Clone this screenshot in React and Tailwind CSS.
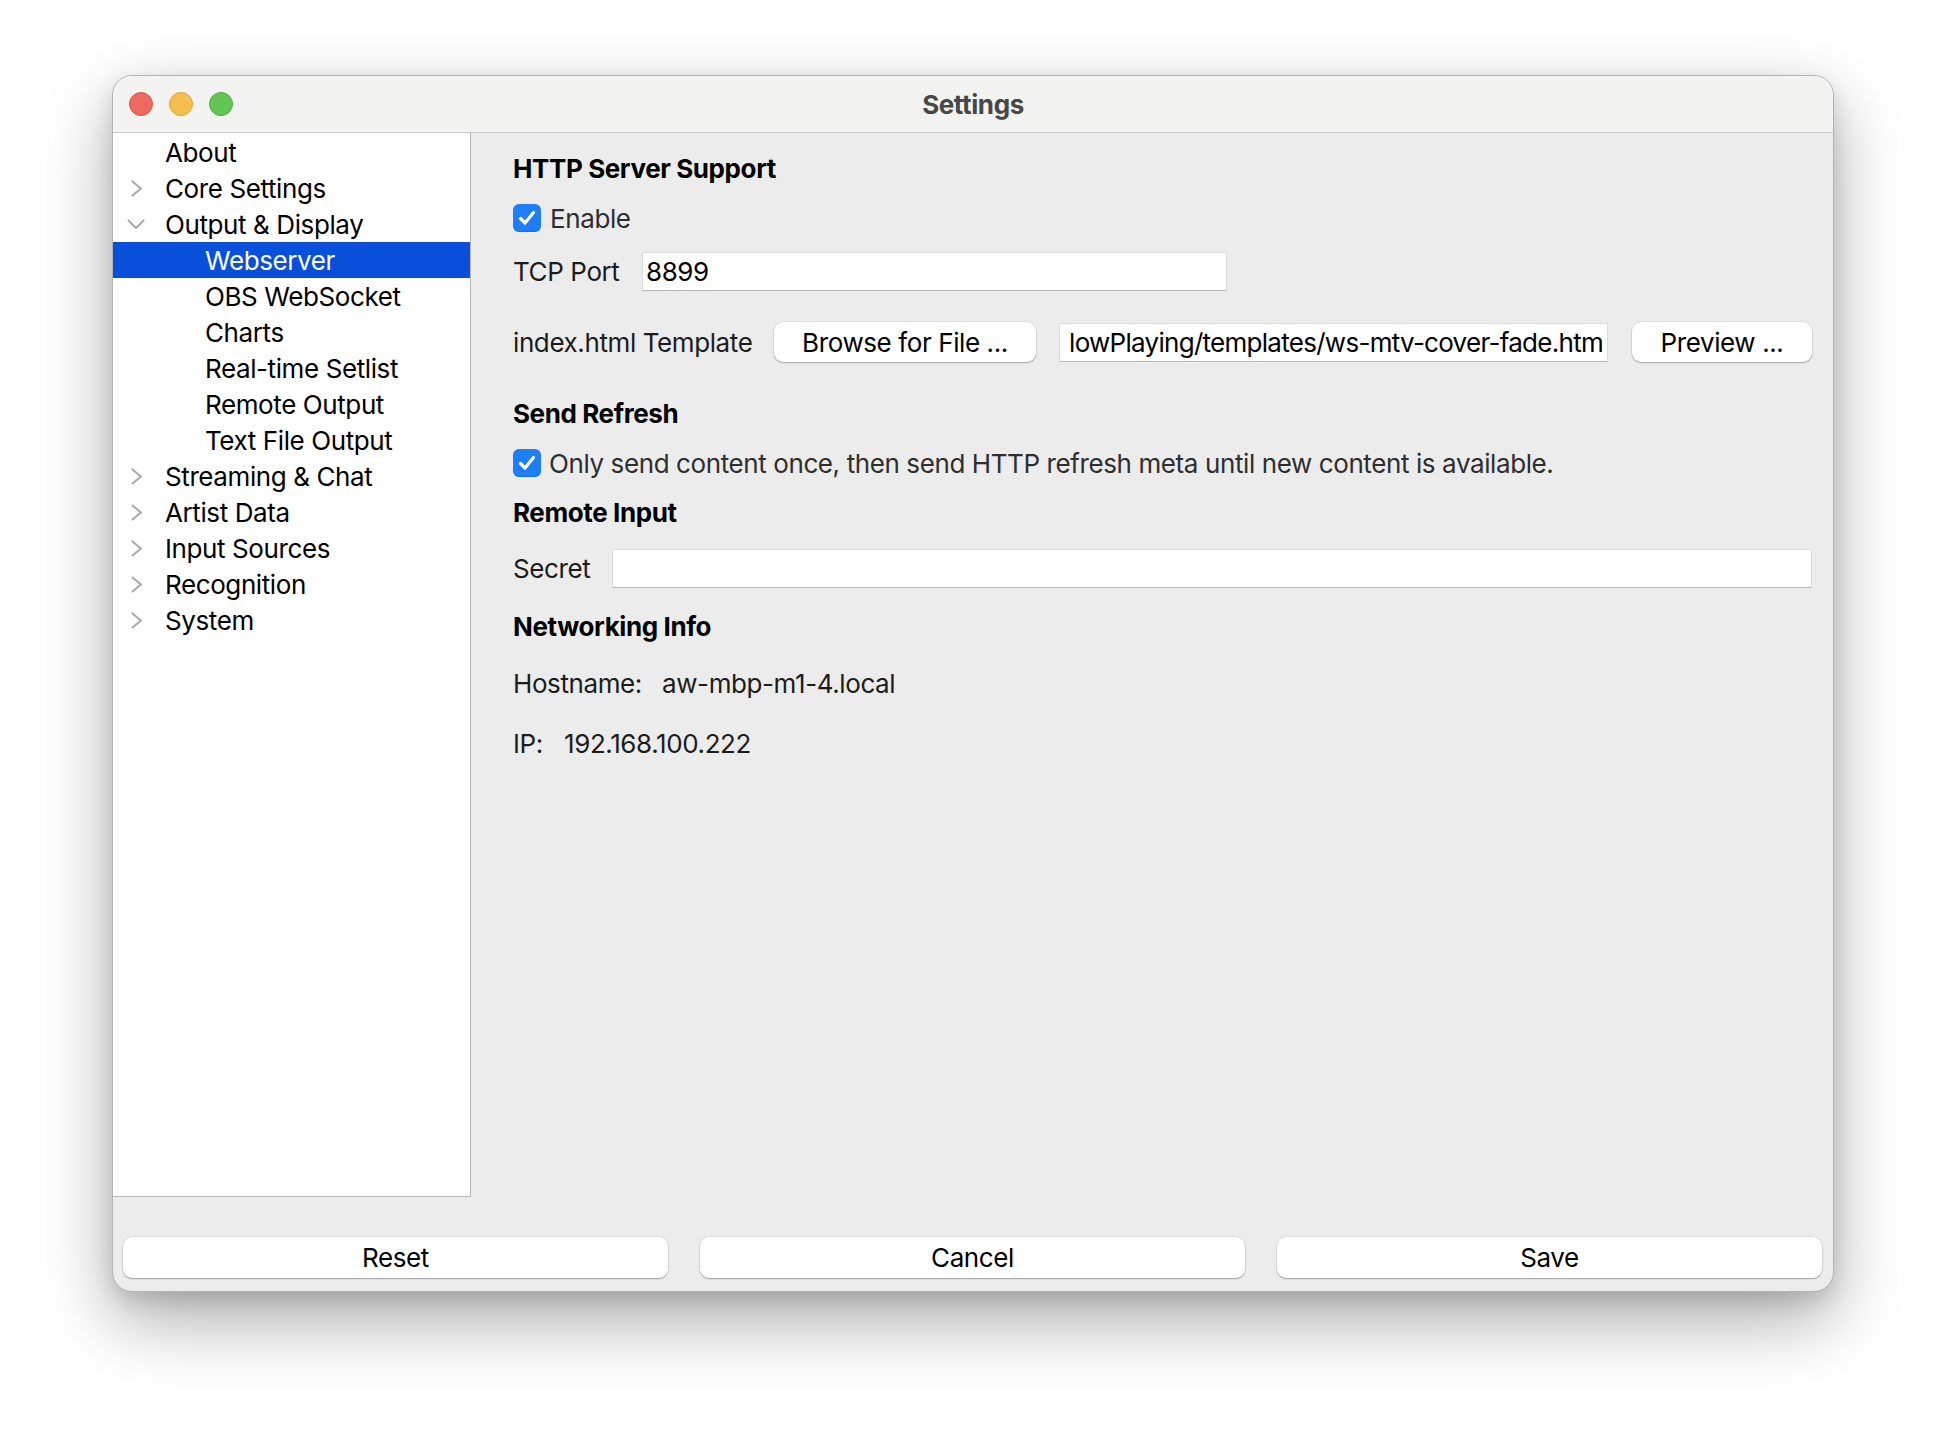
import React from "react";

const tree = [
  { label: "About", level: 0 },
  { label: "Core Settings", level: 0, chevron: "right" },
  { label: "Output & Display", level: 0, chevron: "down" },
  { label: "Webserver", level: 1, selected: true },
  { label: "OBS WebSocket", level: 1 },
  { label: "Charts", level: 1 },
  { label: "Real-time Setlist", level: 1 },
  { label: "Remote Output", level: 1 },
  { label: "Text File Output", level: 1 },
  { label: "Streaming & Chat", level: 0, chevron: "right" },
  { label: "Artist Data", level: 0, chevron: "right" },
  { label: "Input Sources", level: 0, chevron: "right" },
  { label: "Recognition", level: 0, chevron: "right" },
  { label: "System", level: 0, chevron: "right" },
];

function Chevron({ dir }) {
  if (dir === "down") {
    return (
      <svg width="18" height="11" viewBox="0 0 18 11" className="absolute left-[14px] top-[13px]">
        <path d="M1.5 1.5 L9 9 L16.5 1.5" fill="none" stroke="#a9a9a9" strokeWidth="2" strokeLinecap="round" strokeLinejoin="round" />
      </svg>
    );
  }
  return (
    <svg width="12" height="17" viewBox="0 0 12 17" className="absolute left-[18px] top-[10px]">
      <path d="M1.5 1.5 L10 8.5 L1.5 15.5" fill="none" stroke="#a9a9a9" strokeWidth="2" strokeLinecap="round" strokeLinejoin="round" />
    </svg>
  );
}

function Checkbox() {
  return (
    <div className="w-[28px] h-[28px] rounded-[6px] bg-[#1d7ef7] shadow-[inset_0_-1px_0_rgba(0,0,0,0.12)] flex items-center justify-center shrink-0">
      <svg width="18" height="16" viewBox="0 0 18 16">
        <path d="M2.5 8.5 L7 13 L15.5 2.5" fill="none" stroke="#ffffff" strokeWidth="3.2" strokeLinecap="round" strokeLinejoin="round" />
      </svg>
    </div>
  );
}

function MacButton({ children, className = "" }) {
  return (
    <button className={"h-[40px] bg-white rounded-[9px] text-[26px] text-black whitespace-nowrap shadow-[0_1px_1.5px_rgba(0,0,0,0.28),0_0_0_0.5px_rgba(0,0,0,0.1)] flex items-center justify-center " + className}>
      {children}
    </button>
  );
}

function TextInput({ className = "", children }) {
  return (
    <div className={"h-[39px] min-w-0 bg-white border-t border-l border-r border-[#dcdcdc] border-b border-b-[#b9b9b9] flex items-center overflow-hidden text-[26px] text-black " + className}>
      {children}
    </div>
  );
}

export default function App() {
  return (
    <div className="w-[1946px] h-[1440px] bg-white overflow-hidden font-[Inter,'Noto_Sans',sans-serif] tracking-[-0.4px]">
      <div className="ml-[112px] mt-[75px] w-[1722px] h-[1217px] rounded-[20px] border border-[#b3b3b3] bg-[#ececec] overflow-hidden flex flex-col shadow-[0_28px_70px_rgba(0,0,0,0.33),0_8px_20px_rgba(0,0,0,0.12)]">
        {/* title bar */}
        <div className="h-[57px] shrink-0 bg-[#f3f3f2] border-b border-[#c9c9c9] flex items-center relative">
          <div className="flex items-center gap-[16px] pl-[16px]">
            <div className="w-[24px] h-[24px] rounded-full bg-[#ee6a5f] border border-[#d6564b]" />
            <div className="w-[24px] h-[24px] rounded-full bg-[#f5be4f] border border-[#d9a53c]" />
            <div className="w-[24px] h-[24px] rounded-full bg-[#62c655] border border-[#4faa44]" />
          </div>
          <div className="absolute inset-0 flex items-center justify-center text-[26px] font-bold text-[#474747] pointer-events-none">
            Settings
          </div>
        </div>

        {/* body */}
        <div className="flex h-[1064px] shrink-0">
          {/* sidebar */}
          <div className="w-[358px] shrink-0 bg-white border-r border-b border-[#b9b9b9] pt-[1px]">
            {tree.map((item) => (
              <div
                key={item.label}
                className={
                  "relative h-[36px] flex items-center text-[26px] whitespace-nowrap " +
                  (item.selected ? "bg-[#0a4fd9] text-white " : "text-black ") +
                  (item.level === 1 ? "pl-[92px]" : "pl-[52px]")
                }
              >
                {item.chevron && <Chevron dir={item.chevron} />}
                {item.label}
              </div>
            ))}
          </div>

          {/* content */}
          <div className="flex-1 min-w-0 pl-[42px] pr-[21px] pt-[20px] flex flex-col text-[26px] text-[#1c1c1c]">
            <div className="h-[30px] flex items-center font-bold text-black">HTTP Server Support</div>

            <div className="mt-[21px] h-[28px] flex items-center gap-[9px]">
              <Checkbox />
              <span className="text-[#2e2e2e]">Enable</span>
            </div>

            <div className="mt-[20px] h-[39px] flex items-center">
              <span className="w-[129px] shrink-0">TCP Port</span>
              <TextInput className="w-[585px] pl-[3px]">8899</TextInput>
            </div>

            <div className="mt-[31px] h-[40px] flex items-center gap-[20px]">
              <span className="w-[241px] shrink-0 whitespace-nowrap">index.html Template</span>
              <MacButton className="w-[262px] shrink-0">Browse for File ...</MacButton>
              <TextInput className="flex-1 ml-[3px] mr-[4px] justify-end pr-[4px] whitespace-nowrap">
                <span className="tracking-[-0.72px]">lowPlaying/templates/ws-mtv-cover-fade.htm</span>
              </TextInput>
              <MacButton className="w-[180px] shrink-0">Preview ...</MacButton>
            </div>

            <div className="mt-[36px] h-[30px] flex items-center font-bold text-black">Send Refresh</div>

            <div className="mt-[21px] h-[28px] flex items-center gap-[8px]">
              <Checkbox />
              <span className="text-[#2e2e2e] whitespace-nowrap">
                Only send content once, then send HTTP refresh meta until new content is available.
              </span>
            </div>

            <div className="mt-[20px] h-[30px] flex items-center font-bold text-black">Remote Input</div>

            <div className="mt-[22px] h-[39px] flex items-center">
              <span className="w-[99px] shrink-0">Secret</span>
              <TextInput className="flex-1" />
            </div>

            <div className="mt-[23px] h-[30px] flex items-center font-bold text-black">Networking Info</div>

            <div className="mt-[27px] h-[30px] flex items-center">
              <span className="w-[149px] shrink-0">Hostname:</span>
              <span>aw-mbp-m1-4.local</span>
            </div>

            <div className="mt-[30px] h-[30px] flex items-center">
              <span className="w-[51px] shrink-0">IP:</span>
              <span>192.168.100.222</span>
            </div>
          </div>
        </div>

        {/* bottom buttons */}
        <div className="mt-[40px] flex gap-[32px] pl-[10px] pr-[11px]">
          <MacButton className="flex-1 h-[41px]">Reset</MacButton>
          <MacButton className="flex-1 h-[41px]">Cancel</MacButton>
          <MacButton className="flex-1 h-[41px]">Save</MacButton>
        </div>
      </div>
    </div>
  );
}
